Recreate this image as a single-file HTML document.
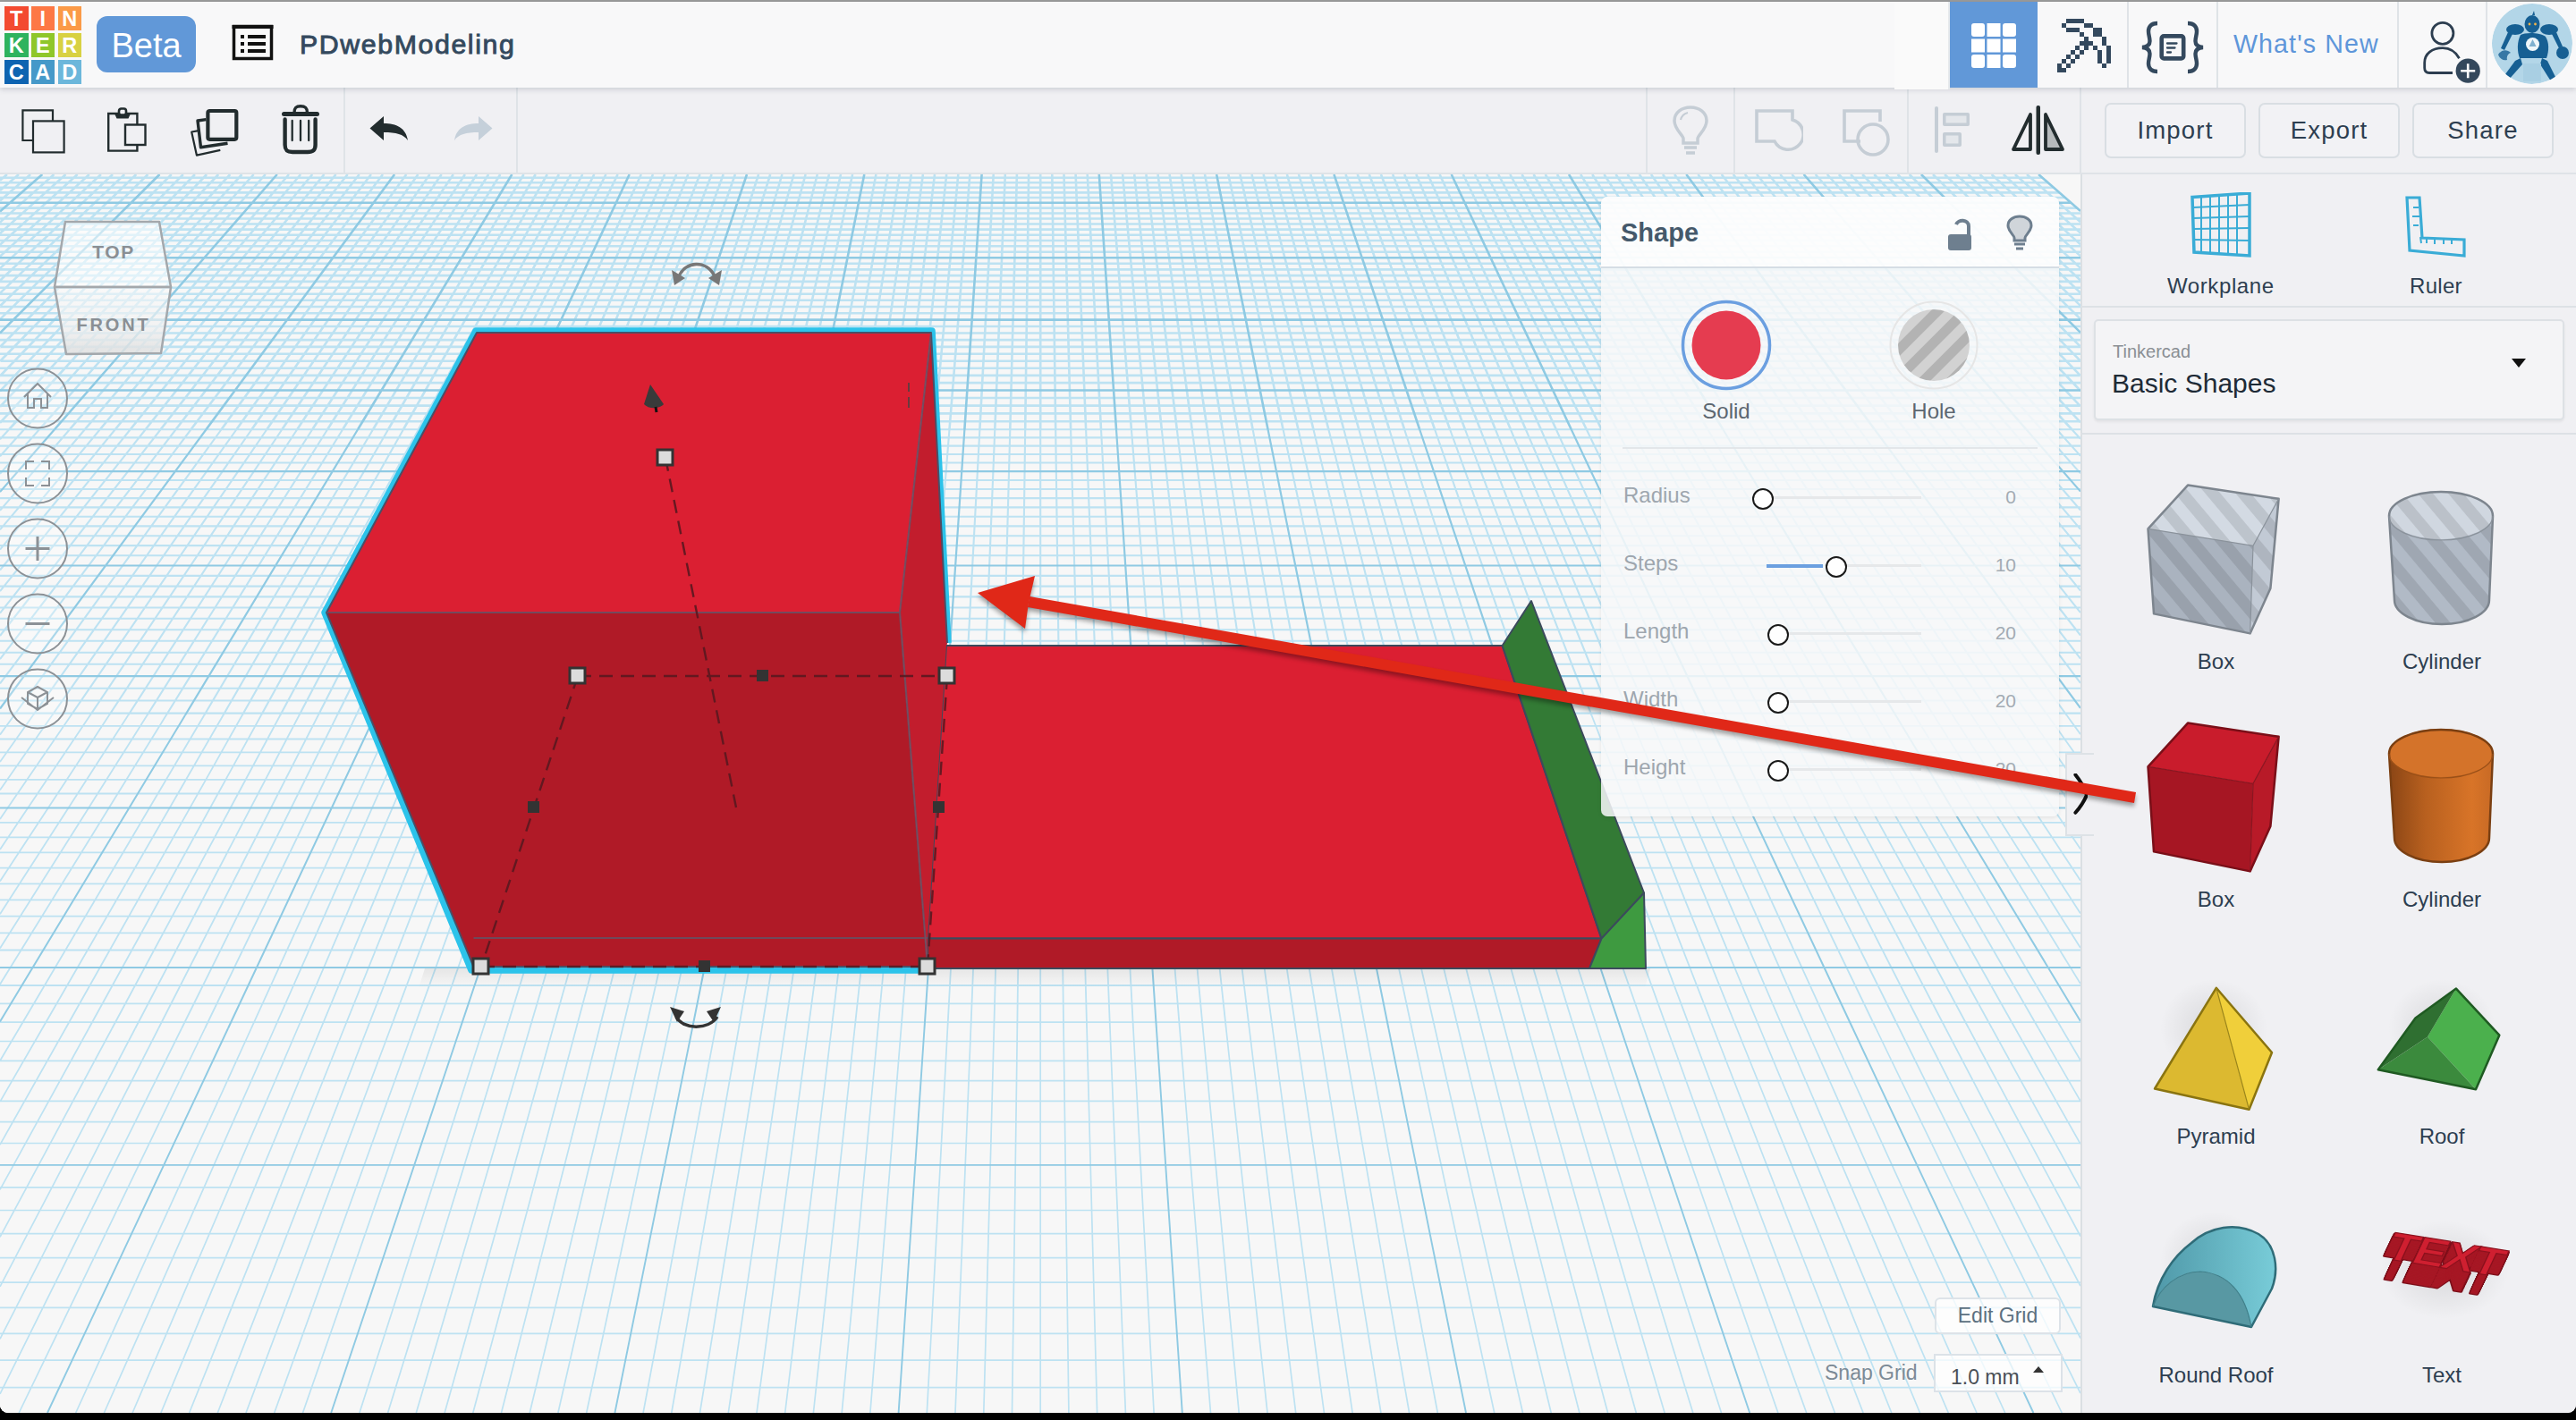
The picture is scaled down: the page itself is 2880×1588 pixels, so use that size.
<!DOCTYPE html>
<html><head><meta charset="utf-8"><style>
*{margin:0;padding:0;box-sizing:border-box}
html,body{width:2880px;height:1588px;overflow:hidden;background:#000;font-family:"Liberation Sans",sans-serif}
.abs{position:absolute}
#app{position:absolute;left:0;top:0;width:2880px;height:1580px;background:#f0f0f3;overflow:hidden;border-radius:0 0 9px 9px}
#topline{position:absolute;left:0;top:0;width:2880px;height:2px;background:#9b9b9b}
#header{position:absolute;left:0;top:2px;width:2880px;height:96px;background:#f8f8f9;box-shadow:0 2px 6px rgba(40,50,70,0.18);z-index:5}
#toolbar{position:absolute;left:0;top:98px;width:2880px;height:97px;background:#f0f0f3;border-bottom:2px solid #dfe3e7;z-index:4}
#viewport{position:absolute;left:0;top:195px;width:2326px;height:1385px;background:#f7f7f7;overflow:hidden}
#rpanel{position:absolute;left:2326px;top:195px;width:554px;height:1385px;background:#f0f0f3}
.tile{position:absolute;width:26.5px;height:26.5px;color:#fff;font-weight:bold;font-size:23.5px;line-height:28px;text-align:center}
.vsep{position:absolute;width:2px;background:#dfe3e7}
.btn{position:absolute;top:17px;height:62px;width:158px;border:2px solid #d9dee3;border-radius:7px;background:#f2f2f5;color:#2d3e50;font-size:27.5px;letter-spacing:1.2px;line-height:58px;text-align:center}
.lbl{position:absolute;white-space:nowrap}
</style></head>
<body>
<div id="app">
<div id="topline"></div>

<div id="header">
<div class="tile" style="left:5px;top:5px;background:#f34a30">T</div><div class="tile" style="left:34.5px;top:5px;background:#fd7845">I</div><div class="tile" style="left:64.5px;top:5px;background:#fb9a47">N</div><div class="tile" style="left:5px;top:35px;background:#2eb35e">K</div><div class="tile" style="left:34.5px;top:35px;background:#8fc72a">E</div><div class="tile" style="left:64.5px;top:35px;background:#d8d142">R</div><div class="tile" style="left:5px;top:65px;background:#0e64b1">C</div><div class="tile" style="left:34.5px;top:65px;background:#4599c9">A</div><div class="tile" style="left:64.5px;top:65px;background:#6cb7db">D</div>
<div class="abs" style="left:108px;top:16px;width:111px;height:63px;background:#6198d8;border-radius:12px;color:#fff;font-size:38px;line-height:66px;text-align:center">Beta</div>
<svg class="abs" style="left:258px;top:24px" width="50" height="44" viewBox="0 0 50 44">
 <rect x="3.5" y="3.5" width="42" height="36" fill="none" stroke="#111" stroke-width="3.5"/>
 <rect x="1.5" y="2" width="46" height="4" fill="#111"/>
 <rect x="11" y="13" width="4" height="4" fill="#111"/><rect x="19" y="13" width="20" height="4" fill="#111"/>
 <rect x="11" y="21" width="4" height="4" fill="#111"/><rect x="19" y="21" width="20" height="4" fill="#111"/>
 <rect x="11" y="29" width="4" height="4" fill="#111"/><rect x="19" y="29" width="20" height="4" fill="#111"/>
</svg>
<div class="lbl" style="left:335px;top:28px;font-size:30.3px;letter-spacing:1.6px;color:#34495e;line-height:40px;-webkit-text-stroke:0.9px #34495e">PDwebModeling</div>

<div class="abs" style="left:2118px;top:0;width:60px;height:98px;background:#fafafa"></div><div class="abs" style="left:2178px;top:0;width:2px;height:98px;background:#e6e9ec"></div><div class="abs" style="left:2180px;top:0;width:98px;height:96px;background:#6198d8"></div>
<svg class="abs" style="left:2204px;top:24px" width="50" height="50" viewBox="0 0 50 50" fill="#fff">
 <rect x="0" y="0" width="15" height="15" rx="3"/><rect x="17.5" y="0" width="15" height="15"/><rect x="35" y="0" width="15" height="15" rx="3"/>
 <rect x="0" y="17.5" width="15" height="15"/><rect x="17.5" y="17.5" width="15" height="15"/><rect x="35" y="17.5" width="15" height="15"/>
 <rect x="0" y="35" width="15" height="15" rx="3"/><rect x="17.5" y="35" width="15" height="15"/><rect x="35" y="35" width="15" height="15" rx="3"/>
</svg>
<div class="vsep" style="left:2378px;top:0;height:96px"></div>
<div class="vsep" style="left:2478px;top:0;height:96px"></div>
<div class="vsep" style="left:2680px;top:0;height:96px"></div>
<div class="vsep" style="left:2779px;top:0;height:96px"></div>
<svg class="abs" style="left:2299.6px;top:19.3px" width="62" height="62" viewBox="0 0 62 62" fill="#34495e" shape-rendering="crispEdges"><g transform="scale(0.996)"><rect x="10" y="0" width="5.1" height="5.1"/><rect x="15" y="0" width="5.1" height="5.1"/><rect x="20" y="0" width="5.1" height="5.1"/><rect x="25" y="0" width="5.1" height="5.1"/><rect x="5" y="5" width="5.1" height="5.1"/><rect x="30" y="5" width="5.1" height="5.1"/><rect x="35" y="5" width="5.1" height="5.1"/><rect x="10" y="10" width="5.1" height="5.1"/><rect x="15" y="10" width="5.1" height="5.1"/><rect x="20" y="10" width="5.1" height="5.1"/><rect x="40" y="10" width="5.1" height="5.1"/><rect x="45" y="10" width="5.1" height="5.1"/><rect x="25" y="15" width="5.1" height="5.1"/><rect x="40" y="15" width="5.1" height="5.1"/><rect x="45" y="15" width="5.1" height="5.1"/><rect x="30" y="20" width="5.1" height="5.1"/><rect x="50" y="20" width="5.1" height="5.1"/><rect x="25" y="25" width="5.1" height="5.1"/><rect x="30" y="25" width="5.1" height="5.1"/><rect x="35" y="25" width="5.1" height="5.1"/><rect x="50" y="25" width="5.1" height="5.1"/><rect x="20" y="30" width="5.1" height="5.1"/><rect x="30" y="30" width="5.1" height="5.1"/><rect x="40" y="30" width="5.1" height="5.1"/><rect x="55" y="30" width="5.1" height="5.1"/><rect x="15" y="35" width="5.1" height="5.1"/><rect x="25" y="35" width="5.1" height="5.1"/><rect x="45" y="35" width="5.1" height="5.1"/><rect x="55" y="35" width="5.1" height="5.1"/><rect x="10" y="40" width="5.1" height="5.1"/><rect x="20" y="40" width="5.1" height="5.1"/><rect x="45" y="40" width="5.1" height="5.1"/><rect x="55" y="40" width="5.1" height="5.1"/><rect x="5" y="45" width="5.1" height="5.1"/><rect x="15" y="45" width="5.1" height="5.1"/><rect x="45" y="45" width="5.1" height="5.1"/><rect x="55" y="45" width="5.1" height="5.1"/><rect x="0" y="50" width="5.1" height="5.1"/><rect x="10" y="50" width="5.1" height="5.1"/><rect x="50" y="50" width="5.1" height="5.1"/><rect x="0" y="55" width="5.1" height="5.1"/><rect x="5" y="55" width="5.1" height="5.1"/></g></svg>
<svg class="abs" style="left:2385px;top:12px" width="90" height="76" viewBox="0 0 90 76">
 <path d="M27 12C20 12 17 16 17 21C17 25 18.5 28 18.5 32C18.5 36 16 38.5 10 39C16 39.5 18.5 42 18.5 46C18.5 50 17 53 17 57C17 62 20 66 27 66" fill="none" stroke="#34495e" stroke-width="4.4"/>
 <path d="M61 12C68 12 71 16 71 21C71 25 69.5 28 69.5 32C69.5 36 72 38.5 78 39C72 39.5 69.5 42 69.5 46C69.5 50 71 53 71 57C71 62 68 66 61 66" fill="none" stroke="#34495e" stroke-width="4.4"/>
 <rect x="31.7" y="26.4" width="24.5" height="25" rx="2.5" fill="none" stroke="#34495e" stroke-width="4.6"/>
 <path d="M38 34.5h10.5M38 39.5h8.5M38 44.5h4" stroke="#34495e" stroke-width="2.3" stroke-linecap="round"/>
</svg>
<div class="lbl" style="left:2497px;top:27.3px;font-size:28.6px;letter-spacing:1.1px;color:#5e96da;line-height:40px">What's New</div>
<svg class="abs" style="left:2700px;top:18.3px" width="76" height="76" viewBox="0 0 76 76">
 <circle cx="30.9" cy="17.3" r="12" fill="none" stroke="#2d3e50" stroke-width="2.8"/>
 <path d="M42 61.5H16C12 61.5 10.7 59 10.7 56V50C10.7 40 19 33.6 31 33.6C39 33.6 45.5 38 49.5 45.2" fill="none" stroke="#2d3e50" stroke-width="2.8"/>
 <circle cx="59.2" cy="59.2" r="13.6" fill="#34485c"/>
 <path d="M59.2 51.2V67.2M51.2 59.2H67.2" stroke="#fff" stroke-width="2.6"/>
</svg>
<svg class="abs" style="left:2785px;top:1px" width="92" height="92" viewBox="0 0 92 92">
 <defs><clipPath id="avc"><circle cx="46" cy="46" r="45"/></clipPath></defs><g clip-path="url(#avc)">
 <circle cx="46" cy="46" r="45" fill="#b3d6e8"/>
 <g fill="#165f93">
  <ellipse cx="46" cy="24" rx="8.5" ry="10"/>
  <path d="M46 14l2-5l1 5z"/>
  <ellipse cx="27" cy="30" rx="10" ry="6"/><ellipse cx="65" cy="30" rx="10" ry="6"/>
  <path d="M33 36c5-3 22-3 28 2c4 6 4 16 1 24h-30c-3-8-3-18 1-26z"/>
  <path d="M19 33l5 2l-9 18l-4-2z"/><path d="M73 33l-5 2l8 16l4-2z"/>
  <circle cx="80" cy="56" r="7"/>
  <path d="M8 58c4-6 10-6 14-2c-3 1-5 4-4 8c-5 1-8-1-10-6z" opacity="0.8"/>
  <path d="M33 62l-6 3l-14 19l6 3l16-18z"/><path d="M57 62l6 3l10 20l-6 3l-12-19z"/>
 </g>
 <path d="M36 68h20v20h-20z" fill="#a9cfe3"/>
 <circle cx="46.5" cy="46.5" r="7.5" fill="#eef6fa"/>
 <path d="M46.5 41l4 8h-8z" fill="#7fb0cf"/>
 <circle cx="43" cy="24" r="1.4" fill="#f2b54a"/><circle cx="49.5" cy="24" r="1.4" fill="#f2b54a"/>
</g></svg>
</div>


<div id="toolbar">
<svg class="abs" style="left:22px;top:23.5px" width="52" height="50" viewBox="0 0 52 50" fill="none" stroke="#222c2e" stroke-width="2.2">
 <path d="M15 35H3.4V1.4H37V13"/>
 <rect x="15" y="13.4" width="34.6" height="35"/>
</svg>
<svg class="abs" style="left:118px;top:22px" width="50" height="54" viewBox="0 0 50 54" fill="none" stroke="#222c2e">
 <path d="M35.4 19V7H3.2V48.6H35.4V42.7" stroke-width="2.4"/>
 <rect x="22" y="19.5" width="22.5" height="22.5" stroke-width="2.4"/>
 <path d="M9.5 6h19l-3 6.5h-13z" fill="#222c2e" stroke="none"/>
 <rect x="15" y="1.5" width="8" height="7" rx="2.5" fill="#f0f0f3" stroke-width="2.6"/>
</svg>
<svg class="abs" style="left:212px;top:20px" width="60" height="60" viewBox="0 0 60 60" fill="none" stroke="#222c2e">
 <path d="M10 28.2L2.2 29.5L7.9 55.6L34.3 49.9" stroke-width="2.2" stroke-linejoin="round"/>
 <path d="M18.4 15.6L9 17L12.5 46.8L42.5 42.3" stroke-width="3.4" stroke-linejoin="round"/>
 <rect x="20.4" y="6" width="31.9" height="31.8" rx="2" stroke-width="4.2" fill="#f0f0f3"/>
</svg>
<svg class="abs" style="left:314px;top:19px" width="46" height="58" viewBox="0 0 46 58" fill="none" stroke="#222c2e">
 <path d="M3.5 10.5H40.5" stroke-width="5" stroke-linecap="round"/>
 <path d="M15 9C15 3.5 17 1.8 22 1.8S29.5 3.5 29.5 9" stroke-width="3.4"/>
 <path d="M4.6 16.5V45C4.6 51 7 53 13 53H30C36 53 38.6 51 38.6 45V16.5" stroke-width="4.4" stroke-linecap="round"/>
 <path d="M12.7 18V40M22 18V40M31.2 18V40" stroke-width="2.3" stroke-linecap="round"/>
</svg>
<div class="vsep" style="left:384px;top:0;height:97px"></div>
<svg class="abs" style="left:412px;top:31px" width="46" height="30" viewBox="0 0 46 30">
 <path d="M1.5 14.5L17 1v8c14 0 25 5 27 19c-5-7-13-9-27-9v9z" fill="#222c2e"/>
</svg>
<svg class="abs" style="left:506px;top:31px" width="46" height="30" viewBox="0 0 46 30">
 <path d="M44.5 14.5L29 1v8c-14 0-25 5-27 19c5-7 13-9 27-9v9z" fill="#c5d0da"/>
</svg>
<div class="vsep" style="left:577px;top:0;height:97px"></div>

<div class="vsep" style="left:1840px;top:0;height:97px"></div>
<svg class="abs" style="left:1868px;top:20px" width="44" height="58" viewBox="0 0 44 58" fill="none" stroke="#c5cdd5">
 <path d="M14 42v-5c0-4-10-10-10-20c0-9 8-15 18-15s18 6 18 15c0 10-10 16-10 20v5z" stroke-width="3.5"/>
 <path d="M15 47h14M17 53h10" stroke-width="3.5"/>
 <path d="M11 16c1-4 4-7 8-8" stroke-width="2.2"/>
</svg>
<div class="vsep" style="left:1938px;top:0;height:97px"></div>
<svg class="abs" style="left:1962px;top:24px" width="54" height="54" viewBox="0 0 54 54" fill="none" stroke="#c5cdd5" stroke-width="3.6">
 <path d="M2 2h40v10a17 17 0 1 1-20 24h-20z"/>
</svg>
<svg class="abs" style="left:2060px;top:24px" width="54" height="54" viewBox="0 0 54 54" fill="none" stroke="#c5cdd5" stroke-width="3.6">
 <path d="M20 36H2V2h40v12"/>
 <circle cx="34" cy="34" r="17"/>
</svg>
<div class="vsep" style="left:2132px;top:0;height:97px"></div>
<svg class="abs" style="left:2160px;top:20px" width="46" height="56" viewBox="0 0 46 56" fill="#c5cdd5">
 <rect x="3" y="1" width="4" height="52" rx="2"/>
 <rect x="12" y="8" width="30" height="15" rx="2"/><rect x="15.5" y="11.5" width="23" height="8" fill="#e4e7eb"/>
 <rect x="12" y="30" width="21" height="16" rx="2"/><rect x="15.5" y="33.5" width="14" height="9" fill="#e4e7eb"/>
</svg>
<svg class="abs" style="left:2249px;top:20px" width="60" height="56" viewBox="0 0 60 56">
 <rect x="27.5" y="0" width="4.5" height="55" rx="2" fill="#222c2e"/>
 <path d="M21 10v39h-19z" fill="none" stroke="#222c2e" stroke-width="3.8" stroke-linejoin="round"/>
 <path d="M38 10v39h19z" fill="#b6babc" stroke="#222c2e" stroke-width="3.8" stroke-linejoin="round"/>
</svg>
<div class="vsep" style="left:2325px;top:0;height:97px"></div>
<div class="btn" style="left:2353px">Import</div>
<div class="btn" style="left:2525px">Export</div>
<div class="btn" style="left:2697px">Share</div>
</div>

<div id="viewport">
<svg class="abs" style="left:0;top:0" width="2326" height="1385" viewBox="0 195 2326 1385">
 <rect x="0" y="195" width="2326" height="1385" fill="#f7f7f7"/>
 <defs><filter id="gblur" x="0" y="0" width="1" height="1"><feGaussianBlur stdDeviation="0.6"/></filter></defs>
 <g filter="url(#gblur)">
 <path d="M0 198.7H2283.3M0 204.2H2289.6M0 209.7H2295.9M0 215.4H2302.4M0 221H2308.9M0 232.6H2322.1M0 238.5H2326M0 244.5H2326M0 250.5H2326M0 256.6H2326M0 262.8H2326M0 269H2326M0 275.3H2326M0 281.7H2326M0 294.8H2326M0 301.4H2326M0 308.1H2326M0 314.9H2326M0 321.8H2326M0 328.8H2326M0 335.8H2326M0 343H2326M0 350.2H2326M0 365H2326M0 372.5H2326M0 380.1H2326M0 387.9H2326M0 395.7H2326M0 403.7H2326M0 411.7H2326M0 419.9H2326M0 428.1H2326M0 445H2326M0 453.6H2326M0 462.4H2326M0 471.2H2326M7.9 195L0 201.7M21 195L0 213M34.1 195L0 224.6M60.4 195L0 248.6M73.5 195L0 261M86.6 195L0 273.7M99.8 195L0 286.8M112.9 195L0 300.1M126 195L0 313.8M139.2 195L0 327.9M152.3 195L0 342.3M165.4 195L0 357.1M191.7 195L0 388M204.8 195L0 404M217.9 195L0 420.5M231.1 195L0 437.4M244.2 195L0 454.9M257.3 195L0 472.8M270.5 195L10.3 480M283.6 195L27.2 480M296.7 195L44.2 480M323 195L78.1 480M336.1 195L95.1 480M349.2 195L112 480M362.4 195L129 480M375.5 195L145.9 480M388.6 195L162.9 480M401.7 195L179.8 480M414.9 195L196.8 480M428 195L213.7 480M454.3 195L247.7 480M467.4 195L264.6 480M480.5 195L281.6 480M493.6 195L298.5 480M506.8 195L315.5 480M519.9 195L332.4 480M533 195L349.4 480M546.2 195L366.3 480M559.3 195L383.3 480M585.5 195L417.2 480M598.7 195L434.2 480M611.8 195L451.1 480M624.9 195L468.1 480M638.1 195L485 480M651.2 195L502 480M664.3 195L518.9 480M677.4 195L535.9 480M690.6 195L552.8 480M716.8 195L586.7 480M730 195L603.7 480M743.1 195L620.7 480M756.2 195L637.6 480M769.3 195L654.6 480M782.5 195L671.5 480M795.6 195L688.5 480M808.7 195L705.4 480M821.9 195L722.4 480M848.1 195L756.3 480M861.2 195L773.2 480M874.4 195L790.2 480M887.5 195L807.2 480M900.6 195L824.1 480M913.8 195L841.1 480M926.9 195L858 480M940 195L875 480M953.1 195L891.9 480M979.4 195L925.8 480M992.5 195L942.8 480M1005.7 195L959.7 480M1018.8 195L976.7 480M1031.9 195L993.7 480M1045 195L1010.6 480M1058.2 195L1027.6 480M1071.3 195L1044.5 480M1084.4 195L1061.5 480M1110.7 195L1095.4 480M1123.8 195L1112.3 480M1136.9 195L1129.3 480M1150.1 195L1146.2 480M1163.2 195L1163.2 480M1176.3 195L1180.2 480M1189.5 195L1197.1 480M1202.6 195L1214.1 480M1215.7 195L1231 480M1242 195L1264.9 480M1255.1 195L1281.9 480M1268.2 195L1298.8 480M1281.4 195L1315.8 480M1294.5 195L1332.7 480M1307.6 195L1349.7 480M1320.7 195L1366.7 480M1333.9 195L1383.6 480M1347 195L1400.6 480M1373.3 195L1434.5 480M1386.4 195L1451.4 480M1399.5 195L1468.4 480M1412.6 195L1485.3 480M1425.8 195L1502.3 480M1438.9 195L1519.2 480M1452 195L1536.2 480M1465.2 195L1553.2 480M1478.3 195L1570.1 480M1504.5 195L1604 480M1517.7 195L1621 480M1530.8 195L1637.9 480M1543.9 195L1654.9 480M1557.1 195L1671.8 480M1570.2 195L1688.8 480M1583.3 195L1705.7 480M1596.4 195L1722.7 480M1609.6 195L1739.7 480M1635.8 195L1773.6 480M1649 195L1790.5 480M1662.1 195L1807.5 480M1675.2 195L1824.4 480M1688.3 195L1841.4 480M1701.5 195L1858.3 480M1714.6 195L1875.3 480M1727.7 195L1892.2 480M1740.9 195L1909.2 480M1767.1 195L1943.1 480M1780.2 195L1960.1 480M1793.4 195L1977 480M1806.5 195L1994 480M1819.6 195L2010.9 480M1832.8 195L2027.9 480M1845.9 195L2044.8 480M1859 195L2061.8 480M1872.1 195L2078.7 480M1898.4 195L2112.7 480M1911.5 195L2129.6 480M1924.7 195L2146.6 480M1937.8 195L2163.5 480M1950.9 195L2180.5 480M1964 195L2197.4 480M1977.2 195L2214.4 480M1990.3 195L2231.3 480M2003.4 195L2248.3 480M2029.7 195L2282.2 480M2042.8 195L2299.2 480M2055.9 195L2316.1 480M2069.1 195L2326 472.4M2082.2 195L2326 454.4M2095.3 195L2326 437M2108.5 195L2326 420.1M2121.6 195L2326 403.6M2134.7 195L2326 387.6M2161 195L2326 356.7M2174.1 195L2326 341.9M2187.2 195L2326 327.5M2200.4 195L2326 313.5M2213.5 195L2326 299.8M2226.6 195L2326 286.4M2239.8 195L2326 273.4M2252.9 195L2326 260.6M2266 195L2326 248.2" stroke="#bde2f2" stroke-width="2.6" fill="none"/>
 <path d="M0 480.2H2326M0 489.4H2326M0 498.6H2326M0 508H2326M0 517.5H2326M0 537H2326M0 547H2326M0 557.1H2326M0 567.4H2326M0 577.8H2326M0 588.4H2326M0 599.2H2326M0 610.1H2326M0 621.2H2326M0 643.9H2326M0 655.6H2326M0 667.4H2326M0 679.5H2326M0 691.7H2326M0 704.2H2326M0 716.8H2326M0 729.7H2326M0 742.8H2326M0 769.7H2326M0 783.5H2326M0 797.6H2326M10.3 480L0 491.3M27.2 480L0 510.3M44.2 480L0 529.9M78.1 480L0 570.9M95.1 480L0 592.4M112 480L0 614.6M129 480L0 637.5M145.9 480L0 661.2M162.9 480L0 685.7M179.8 480L0 711M196.8 480L0 737.2M213.7 480L0 764.3M247.7 480L15.7 800M264.6 480L36.9 800M281.6 480L58.2 800M298.5 480L79.4 800M315.5 480L100.7 800M332.4 480L121.9 800M349.4 480L143.2 800M366.3 480L164.4 800M383.3 480L185.7 800M417.2 480L228.2 800M434.2 480L249.4 800M451.1 480L270.7 800M468.1 480L291.9 800M485 480L313.2 800M502 480L334.4 800M518.9 480L355.7 800M535.9 480L376.9 800M552.8 480L398.2 800M586.7 480L440.7 800M603.7 480L461.9 800M620.7 480L483.2 800M637.6 480L504.4 800M654.6 480L525.7 800M671.5 480L546.9 800M688.5 480L568.2 800M705.4 480L589.4 800M722.4 480L610.7 800M756.3 480L653.2 800M773.2 480L674.4 800M790.2 480L695.7 800M807.2 480L716.9 800M824.1 480L738.2 800M841.1 480L759.4 800M858 480L780.7 800M875 480L801.9 800M891.9 480L823.2 800M925.8 480L865.7 800M942.8 480L886.9 800M959.7 480L908.2 800M976.7 480L929.4 800M993.7 480L950.7 800M1010.6 480L971.9 800M1027.6 480L993.2 800M1044.5 480L1014.4 800M1061.5 480L1035.7 800M1095.4 480L1078.2 800M1112.3 480L1099.4 800M1129.3 480L1120.7 800M1146.2 480L1141.9 800M1163.2 480L1163.2 800M1180.2 480L1184.5 800M1197.1 480L1205.7 800M1214.1 480L1227 800M1231 480L1248.2 800M1264.9 480L1290.7 800M1281.9 480L1312 800M1298.8 480L1333.2 800M1315.8 480L1354.5 800M1332.7 480L1375.7 800M1349.7 480L1397 800M1366.7 480L1418.2 800M1383.6 480L1439.5 800M1400.6 480L1460.7 800M1434.5 480L1503.2 800M1451.4 480L1524.5 800M1468.4 480L1545.7 800M1485.3 480L1567 800M1502.3 480L1588.2 800M1519.2 480L1609.5 800M1536.2 480L1630.7 800M1553.2 480L1652 800M1570.1 480L1673.2 800M1604 480L1715.7 800M1621 480L1737 800M1637.9 480L1758.2 800M1654.9 480L1779.5 800M1671.8 480L1800.7 800M1688.8 480L1822 800M1705.7 480L1843.2 800M1722.7 480L1864.5 800M1739.7 480L1885.7 800M1773.6 480L1928.2 800M1790.5 480L1949.5 800M1807.5 480L1970.7 800M1824.4 480L1992 800M1841.4 480L2013.2 800M1858.3 480L2034.5 800M1875.3 480L2055.7 800M1892.2 480L2077 800M1909.2 480L2098.2 800M1943.1 480L2140.7 800M1960.1 480L2162 800M1977 480L2183.2 800M1994 480L2204.5 800M2010.9 480L2225.7 800M2027.9 480L2247 800M2044.8 480L2268.2 800M2061.8 480L2289.5 800M2078.7 480L2310.7 800M2112.7 480L2326 763.8M2129.6 480L2326 736.7M2146.6 480L2326 710.5M2163.5 480L2326 685.2M2180.5 480L2326 660.7M2197.4 480L2326 637M2214.4 480L2326 614.1M2231.3 480L2326 591.9M2248.3 480L2326 570.5M2282.2 480L2326 529.4M2299.2 480L2326 509.9M2316.1 480L2326 490.8" stroke="#bde2f2" stroke-width="2.1" fill="none"/>
 <path d="M0 811.9H2326M0 826.5H2326M0 841.3H2326M0 856.4H2326M0 871.8H2326M0 887.5H2326M0 919.8H2326M0 936.4H2326M0 953.4H2326M0 970.7H2326M0 988.3H2326M0 1006.3H2326M0 1024.6H2326M0 1043.4H2326M0 1062.5H2326M0 1102H2326M0 1122.4H2326M0 1143.2H2326M15.7 800L0 821.6M36.9 800L0 851.9M58.2 800L0 883.4M79.4 800L0 916M100.7 800L0 950M121.9 800L0 985.4M143.2 800L0 1022.2M164.4 800L0 1060.6M185.7 800L0 1100.7M228.2 800L21.5 1150M249.4 800L47.4 1150M270.7 800L73.4 1150M291.9 800L99.3 1150M313.2 800L125.3 1150M334.4 800L151.2 1150M355.7 800L177.2 1150M376.9 800L203.1 1150M398.2 800L229.1 1150M440.7 800L280.9 1150M461.9 800L306.9 1150M483.2 800L332.8 1150M504.4 800L358.8 1150M525.7 800L384.7 1150M546.9 800L410.7 1150M568.2 800L436.6 1150M589.4 800L462.6 1150M610.7 800L488.5 1150M653.2 800L540.4 1150M674.4 800L566.4 1150M695.7 800L592.3 1150M716.9 800L618.3 1150M738.2 800L644.2 1150M759.4 800L670.2 1150M780.7 800L696.1 1150M801.9 800L722.1 1150M823.2 800L748 1150M865.7 800L799.9 1150M886.9 800L825.9 1150M908.2 800L851.8 1150M929.4 800L877.8 1150M950.7 800L903.7 1150M971.9 800L929.7 1150M993.2 800L955.6 1150M1014.4 800L981.6 1150M1035.7 800L1007.5 1150M1078.2 800L1059.4 1150M1099.4 800L1085.4 1150M1120.7 800L1111.3 1150M1141.9 800L1137.3 1150M1163.2 800L1163.2 1150M1184.5 800L1189.1 1150M1205.7 800L1215.1 1150M1227 800L1241 1150M1248.2 800L1267 1150M1290.7 800L1318.9 1150M1312 800L1344.8 1150M1333.2 800L1370.8 1150M1354.5 800L1396.7 1150M1375.7 800L1422.7 1150M1397 800L1448.6 1150M1418.2 800L1474.6 1150M1439.5 800L1500.5 1150M1460.7 800L1526.5 1150M1503.2 800L1578.4 1150M1524.5 800L1604.3 1150M1545.7 800L1630.3 1150M1567 800L1656.2 1150M1588.2 800L1682.2 1150M1609.5 800L1708.1 1150M1630.7 800L1734.1 1150M1652 800L1760 1150M1673.2 800L1786 1150M1715.7 800L1837.9 1150M1737 800L1863.8 1150M1758.2 800L1889.8 1150M1779.5 800L1915.7 1150M1800.7 800L1941.7 1150M1822 800L1967.6 1150M1843.2 800L1993.6 1150M1864.5 800L2019.5 1150M1885.7 800L2045.5 1150M1928.2 800L2097.3 1150M1949.5 800L2123.3 1150M1970.7 800L2149.2 1150M1992 800L2175.2 1150M2013.2 800L2201.1 1150M2034.5 800L2227.1 1150M2055.7 800L2253 1150M2077 800L2279 1150M2098.2 800L2304.9 1150M2140.7 800L2326 1100.1M2162 800L2326 1060M2183.2 800L2326 1021.6M2204.5 800L2326 984.8M2225.7 800L2326 949.4M2247 800L2326 915.5M2268.2 800L2326 882.8M2289.5 800L2326 851.4M2310.7 800L2326 821.1" stroke="#bde2f2" stroke-width="1.8" fill="none"/>
 <path d="M0 193.2H2277.1M0 1164.5H2326M0 1186.3H2326M0 1208.6H2326M0 1231.3H2326M0 1254.6H2326M0 1278.5H2326M0 1327.9H2326M0 1353.5H2326M0 1379.7H2326M0 1406.6H2326M0 1434.1H2326M0 1462.4H2326M0 1491.4H2326M0 1521.1H2326M0 1551.7H2326M21.5 1150L0 1186.3M47.4 1150L0 1232.1M73.4 1150L0 1280.1M99.3 1150L0 1330.4M125.3 1150L0 1383.3M151.2 1150L0 1438.8M177.2 1150L0 1497.3M203.1 1150L0 1558.9M229.1 1150L21.2 1580M280.9 1150L84.7 1580M306.9 1150L116.4 1580M332.8 1150L148.1 1580M358.8 1150L179.9 1580M384.7 1150L211.6 1580M410.7 1150L243.3 1580M436.6 1150L275 1580M462.6 1150L306.7 1580M488.5 1150L338.5 1580M540.4 1150L401.9 1580M566.4 1150L433.6 1580M592.3 1150L465.3 1580M618.3 1150L497.1 1580M644.2 1150L528.8 1580M670.2 1150L560.5 1580M696.1 1150L592.2 1580M722.1 1150L623.9 1580M748 1150L655.7 1580M799.9 1150L719.1 1580M825.9 1150L750.8 1580M851.8 1150L782.5 1580M877.8 1150L814.3 1580M903.7 1150L846 1580M929.7 1150L877.7 1580M955.6 1150L909.4 1580M981.6 1150L941.2 1580M1007.5 1150L972.9 1580M1059.4 1150L1036.3 1580M1085.4 1150L1068 1580M1111.3 1150L1099.8 1580M1137.3 1150L1131.5 1580M1163.2 1150L1163.2 1580M1189.1 1150L1194.9 1580M1215.1 1150L1226.6 1580M1241 1150L1258.4 1580M1267 1150L1290.1 1580M1318.9 1150L1353.5 1580M1344.8 1150L1385.2 1580M1370.8 1150L1417 1580M1396.7 1150L1448.7 1580M1422.7 1150L1480.4 1580M1448.6 1150L1512.1 1580M1474.6 1150L1543.9 1580M1500.5 1150L1575.6 1580M1526.5 1150L1607.3 1580M1578.4 1150L1670.7 1580M1604.3 1150L1702.5 1580M1630.3 1150L1734.2 1580M1656.2 1150L1765.9 1580M1682.2 1150L1797.6 1580M1708.1 1150L1829.3 1580M1734.1 1150L1861.1 1580M1760 1150L1892.8 1580M1786 1150L1924.5 1580M1837.9 1150L1987.9 1580M1863.8 1150L2019.7 1580M1889.8 1150L2051.4 1580M1915.7 1150L2083.1 1580M1941.7 1150L2114.8 1580M1967.6 1150L2146.5 1580M1993.6 1150L2178.3 1580M2019.5 1150L2210 1580M2045.5 1150L2241.7 1580M2097.3 1150L2305.2 1580M2123.3 1150L2326 1558.1M2149.2 1150L2326 1496.5M2175.2 1150L2326 1438.1M2201.1 1150L2326 1382.5M2227.1 1150L2326 1329.7M2253 1150L2326 1279.4M2279 1150L2326 1231.4M2304.9 1150L2326 1185.7" stroke="#bde2f2" stroke-width="1.7" fill="none"/>
 <path d="M0 226.8H2315.4M0 288.2H2326M0 357.6H2326M0 436.5H2326M47.3 195L0 236.4M178.5 195L0 372.3M309.8 195L61.2 480M441.1 195L230.7 480M572.4 195L400.2 480M703.7 195L569.8 480M835 195L739.3 480M966.3 195L908.9 480M1097.6 195L1078.4 480M1228.8 195L1248 480M1360.1 195L1417.5 480M1491.4 195L1587.1 480M1622.7 195L1756.6 480M1754 195L1926.2 480M1885.3 195L2095.7 480M2016.6 195L2265.2 480M2147.9 195L2326 371.9M2279.1 195L2326 236.1" stroke="#8fcae3" stroke-width="2.6" fill="none"/>
 <path d="M0 527.2H2326M0 632.5H2326M0 756.2H2326M61.2 480L0 550.1M230.7 480L0 792.5M400.2 480L206.9 800M569.8 480L419.4 800M739.3 480L631.9 800M908.9 480L844.4 800M1078.4 480L1056.9 800M1248 480L1269.5 800M1417.5 480L1482 800M1587.1 480L1694.5 800M1756.6 480L1907 800M1926.2 480L2119.5 800M2095.7 480L2326 791.9M2265.2 480L2326 549.6" stroke="#8fcae3" stroke-width="2.2" fill="none"/>
 <path d="M0 903.5H2326M0 1082H2326M206.9 800L0 1142.6M419.4 800L255 1150M631.9 800L514.5 1150M844.4 800L774 1150M1056.9 800L1033.5 1150M1269.5 800L1292.9 1150M1482 800L1552.4 1150M1694.5 800L1811.9 1150M1907 800L2071.4 1150M2119.5 800L2326 1141.9" stroke="#8fcae3" stroke-width="2.0" fill="none"/>
 <path d="M0 1302.9H2326M255 1150L53 1580M514.5 1150L370.2 1580M774 1150L687.4 1580M1033.5 1150L1004.6 1580M1292.9 1150L1321.8 1580M1552.4 1150L1639 1580M1811.9 1150L1956.2 1580M2071.4 1150L2273.4 1580" stroke="#8fcae3" stroke-width="1.9" fill="none"/>
 </g>

 <!-- shadow -->
 <defs><linearGradient id="shd" x1="0" y1="0" x2="0" y2="1"><stop offset="0" stop-color="rgba(0,0,0,0.07)"/><stop offset="1" stop-color="rgba(0,0,0,0)"/></linearGradient></defs><path d="M475 1083H1845l-6 22H468z" fill="url(#shd)"/>
 <!-- cube right face -->
 <polygon points="1041,372 1059,719 1058,722 1037,1050 1037,1081 1006,685" fill="#c21d2d"/>
 <!-- plate top -->
 <polygon points="1058,722 1679.6,722 1790.5,1049.6 1037,1049.6" fill="#db1f32" stroke="#3c4a5c" stroke-width="2" stroke-linejoin="round"/>
 <!-- plate front -->
 <polygon points="1037,1049.6 1790.5,1049.6 1777,1083 1037,1083" fill="#b01a27" stroke="#3c4a5c" stroke-width="2"/>
 <!-- green roof -->
 <polygon points="1679.6,722 1712,672 1838,998.5 1790.5,1049.6" fill="#337a35" stroke="#3c4a5c" stroke-width="2" stroke-linejoin="round"/>
 <polygon points="1790.5,1049.6 1838,998.5 1840,1083 1777,1083" fill="#3e9a40" stroke="#3c4a5c" stroke-width="2" stroke-linejoin="round"/>

 <polyline points="1040,1085 527,1085 363,685 532,370 1042,370 1060,719" fill="none" stroke="#2cc3ea" stroke-width="7.5" stroke-linejoin="round"/><!--533,372 1041,372 1059,719 1058,722 1037,1081 529.5,1081 365,685-->
 <polygon points="533,372 1041,372 1006,685 365,685" fill="#db1f32"/>
 <polygon points="365,685 1006,685 1037,1081 529.5,1081" fill="#b01a27"/>
 <polygon points="1041,372 1059,719 1058,722 1037,1050 1037,1081 1006,685" fill="#c21d2d"/>
 <polyline points="1037,1081 529.5,1081 365,685 533,372 1041,372 1059,719" fill="none" stroke="#4a4f66" stroke-width="2" stroke-linejoin="round"/><!--533,372 1041,372 1059,719 1058,722 1037,1081 529.5,1081 365,685-->
 <path d="M365 685H1006L1037 1081M1006 685L1041 372M529.5 1049H1037" stroke="#5a5a6e" stroke-width="2.2" fill="none" opacity="0.75"/>

 <g stroke="#5a1820" stroke-width="2.4" stroke-dasharray="15 9" fill="none" opacity="0.9">
  <path d="M646 756H1059"/><path d="M646 756L538 1081"/><path d="M1059 756L1037 1081"/><path d="M538 1081H1037"/>
  <path d="M744 512L823 903"/>
 </g>
 <g fill="#dcdcdc" stroke="#333" stroke-width="3">
  <rect x="637" y="747" width="17" height="17"/><rect x="1050" y="747" width="17" height="17"/>
  <rect x="529" y="1072" width="17" height="17"/><rect x="1028" y="1072" width="17" height="17"/>
  <rect x="735" y="503" width="17" height="17"/>
 </g>
 <g fill="#333">
  <rect x="846" y="749" width="13" height="13"/><rect x="590" y="896" width="13" height="13"/>
  <rect x="1043" y="896" width="13" height="13"/><rect x="781" y="1074" width="13" height="13"/>
 </g>
 <path d="M727 430L742 452C738 457 725 458 720 452Z" fill="#3a3a3a"/>
 <path d="M733 455L734 461" stroke="#111" stroke-width="3"/>
 <path d="M759 309C766 292 790 290 799 309" stroke="#777" stroke-width="3.5" fill="none"/>
 <path d="M751 302l3 17l12-8z" fill="#777"/><path d="M807 302l-3 17l-12-8z" fill="#777"/>
 <path d="M756 1137c8 15 36 15 46 0" stroke="#333" stroke-width="3.5" fill="none"/>
 <path d="M749 1126l16 5l-8 12z" fill="#333"/><path d="M806 1126l-16 5l8 12z" fill="#333"/>
 <path d="M1016 428v10M1016 444v12" stroke="#444" stroke-width="1.5"/>

 <g>
  <polygon points="73,248 178,248 191,321 61,321" fill="rgba(255,255,255,0.55)" stroke="#a4a8ac" stroke-width="2.5" stroke-linejoin="round"/>
  <defs><linearGradient id="vcg" x1="0" y1="0" x2="0" y2="1"><stop offset="0" stop-color="rgba(250,250,250,0.55)"/><stop offset="0.6" stop-color="rgba(240,240,240,0.7)"/><stop offset="1" stop-color="rgba(222,222,222,0.85)"/></linearGradient></defs><polygon points="61,321 191,321 180,395 74,396" fill="url(#vcg)" stroke="#a4a8ac" stroke-width="2.5" stroke-linejoin="round"/>
  <text x="127" y="289" font-family="Liberation Sans" font-weight="bold" font-size="21" letter-spacing="1.5" fill="#8a8f94" text-anchor="middle">TOP</text>
  <text x="127" y="370" font-family="Liberation Sans" font-weight="bold" font-size="20" letter-spacing="2.8" fill="#8a8f94" text-anchor="middle">FRONT</text>
 </g>
 <g fill="rgba(255,255,255,0.25)" stroke="#8c9196" stroke-width="2">
  <circle cx="42" cy="445.5" r="33"/><circle cx="42" cy="529.5" r="33"/><circle cx="42" cy="613.5" r="33"/><circle cx="42" cy="697.5" r="33"/><circle cx="42" cy="781.5" r="33"/>
 </g>
 <g fill="none" stroke="#8c9196" stroke-width="2">
  <path d="M27 444l15-15l15 15M31 440v16h7v-10h8v10h7v-16"/>
  <path d="M29 525v-9h9M46 516h9v9M55 534v9h-9M38 543h-9v-9"/>
  <path d="M42 600v27M28.5 613.5h27" stroke-width="3"/>
  <path d="M28.5 697.5h27" stroke-width="3"/>
  <path d="M42 768l-11 6v13l11 6l11-6v-13zM31 774l11 6l11-6M42 780v13M24 780l18 14l18-14"/>
 </g>
</svg>
<div class="abs" style="left:2163px;top:1256px;width:141px;height:41px;border:2px solid #dde3e8;border-radius:6px;background:rgba(255,255,255,0.75);color:#5c7080;font-size:23px;line-height:37px;text-align:center">Edit Grid</div>
<div class="lbl" style="left:2040px;top:1325.4px;font-size:23px;color:#7c8a96;line-height:30px">Snap Grid</div>
<div class="abs" style="left:2162px;top:1319px;width:144px;height:43px;border:2px solid #dce2e8;background:rgba(255,255,255,0.75);color:#4a5056;font-size:23px;line-height:48px;padding-left:17px">1.0 mm</div>
<svg class="abs" style="left:2273px;top:1333px" width="12" height="7"><path d="M0 7L6 0L12 7z" fill="#333"/></svg>
</div>


<div class="abs" style="left:1790px;top:220px;width:512px;height:693px;border-radius:7px;background:rgba(247,248,249,0.86);box-shadow:0 2px 4px rgba(0,0,0,0.08);overflow:hidden">
 <div class="abs" style="left:0;top:0;width:512px;height:80px;background:rgba(255,255,255,0.7);border-bottom:2px solid #d5dde4"></div>
 <div class="lbl" style="left:22px;top:22px;font-size:29px;font-weight:bold;color:#45596b;line-height:36px">Shape</div>
 <svg class="abs" style="left:386px;top:22px" width="30" height="40" viewBox="0 0 30 40">
  <path d="M11 9c2-6 14-6 14 2v12" fill="none" stroke="#6e7f8f" stroke-width="4"/>
  <rect x="2" y="20" width="26" height="18" rx="3" fill="#6e7f8f"/>
 </svg>
 <svg class="abs" style="left:452px;top:20px" width="32" height="42" viewBox="0 0 32 42">
  <path d="M10 29v-3c0-3-7-7-7-14c0-6 6-10 13-10s13 4 13 10c0 7-7 11-7 14v3z" fill="#d0d5da" stroke="#6e7f8f" stroke-width="3"/>
  <path d="M10 33h12M12 38h8" stroke="#6e7f8f" stroke-width="3"/>
 </svg>
 <svg class="abs" style="left:88px;top:114px" width="104" height="104" viewBox="0 0 104 104">
  <circle cx="52" cy="52" r="48.5" fill="none" stroke="#6b9fe0" stroke-width="3.5"/>
  <circle cx="52" cy="52" r="38.5" fill="#e53c50"/>
 </svg>
 <svg class="abs" style="left:320px;top:114px" width="104" height="104" viewBox="0 0 104 104">
  <defs><pattern id="st" patternUnits="userSpaceOnUse" width="22" height="22" patternTransform="rotate(45)"><rect width="11" height="22" fill="#b3b3b3"/><rect x="11" width="11" height="22" fill="#d2d2d2"/></pattern></defs>
  <circle cx="52" cy="52" r="48.5" fill="none" stroke="#e6e6e6" stroke-width="2"/>
  <circle cx="52" cy="52" r="40" fill="url(#st)"/>
 </svg>
 
 <div class="lbl" style="left:90px;width:100px;text-align:center;font-size:24px;color:#5c6670;line-height:30px;top:224.5px">Solid</div>
 <div class="lbl" style="left:322px;top:224.5px;width:100px;text-align:center;font-size:24px;color:#5c6670;line-height:30px">Hole</div>
 <div class="abs" style="left:24px;top:280px;width:464px;height:2px;background:#e3e6e9"></div>
<div class="lbl" style="left:25px;top:319.1px;font-size:24px;color:#9ea6ae;line-height:30px">Radius</div><div class="abs" style="left:180.8px;top:335.0px;width:177.2px;height:3px;background:#e6e8ea"></div><div class="abs" style="left:168.8px;top:325.5px;width:24px;height:24px;border-radius:50%;border:2.5px solid #1a1a1a;background:#fff"></div><div class="lbl" style="left:404.0px;top:320.7px;width:60px;text-align:right;font-size:21px;color:#a3abb3;line-height:30px">0</div><div class="lbl" style="left:25px;top:395.1px;font-size:24px;color:#9ea6ae;line-height:30px">Steps</div><div class="abs" style="left:262.5px;top:411.0px;width:95.5px;height:3px;background:#e6e8ea"></div><div class="abs" style="left:184.5px;top:410.5px;width:63.5px;height:4px;background:#6b9fe0"></div><div class="abs" style="left:250.5px;top:401.5px;width:24px;height:24px;border-radius:50%;border:2.5px solid #1a1a1a;background:#fff"></div><div class="lbl" style="left:404.0px;top:396.7px;width:60px;text-align:right;font-size:21px;color:#a3abb3;line-height:30px">10</div><div class="lbl" style="left:25px;top:471.2px;font-size:24px;color:#9ea6ae;line-height:30px">Length</div><div class="abs" style="left:197.7px;top:487.1px;width:160.3px;height:3px;background:#e6e8ea"></div><div class="abs" style="left:185.7px;top:477.6px;width:24px;height:24px;border-radius:50%;border:2.5px solid #1a1a1a;background:#fff"></div><div class="lbl" style="left:404.0px;top:472.8px;width:60px;text-align:right;font-size:21px;color:#a3abb3;line-height:30px">20</div><div class="lbl" style="left:25px;top:547.2px;font-size:24px;color:#9ea6ae;line-height:30px">Width</div><div class="abs" style="left:197.7px;top:563.1px;width:160.3px;height:3px;background:#e6e8ea"></div><div class="abs" style="left:185.7px;top:553.6px;width:24px;height:24px;border-radius:50%;border:2.5px solid #1a1a1a;background:#fff"></div><div class="lbl" style="left:404.0px;top:548.8px;width:60px;text-align:right;font-size:21px;color:#a3abb3;line-height:30px">20</div><div class="lbl" style="left:25px;top:623.3px;font-size:24px;color:#9ea6ae;line-height:30px">Height</div><div class="abs" style="left:197.7px;top:639.2px;width:160.3px;height:3px;background:#e6e8ea"></div><div class="abs" style="left:185.7px;top:629.7px;width:24px;height:24px;border-radius:50%;border:2.5px solid #1a1a1a;background:#fff"></div><div class="lbl" style="left:404.0px;top:624.9px;width:60px;text-align:right;font-size:21px;color:#a3abb3;line-height:30px">20</div></div>

<div id="rpanel"><div class="abs" style="left:0;top:0;width:2px;height:1385px;background:#dbdfe3"></div>
 <svg class="abs" style="left:122px;top:20px" width="70" height="74" viewBox="0 0 70 74" fill="none" stroke="#3aacd6">
  <path d="M3 5.5L67 1V71L5 67z" stroke-width="3.5"/>
  <path d="M13 5v63M23 4v64M33 3.5v65M43 2.7v66.3M53 2v67" stroke-width="2"/>
  <path d="M4 17l63-3M4 29l63-2M4 41l63-1M5 53l62 1" stroke-width="2"/>
 </svg>
 <div class="lbl" style="left:97px;top:110px;font-size:24px;letter-spacing:0.6px;color:#2d3e50;line-height:30px">Workplane</div>
 <svg class="abs" style="left:362px;top:24px" width="74" height="70" viewBox="0 0 74 70" fill="none" stroke="#3aacd6">
  <path d="M3 2H17L20 47L67 49V67L6 61z" stroke-width="3.2"/>
  <path d="M10 13h6M9 23h8M10 33h6M18 46l1 7M25 47v6M34 48v6M44 48v6M53 48v6" stroke-width="2"/>
 </svg>
 <div class="lbl" style="left:368px;top:110px;font-size:24px;letter-spacing:0.3px;color:#2d3e50;line-height:30px">Ruler</div>
 <div class="abs" style="left:0;top:147px;width:554px;height:2px;background:#dde1e5"></div>
 <div class="abs" style="left:15px;top:162px;width:526px;height:113px;border:2px solid #dde1e5;border-radius:5px;background:#f4f4f6;box-shadow:0 2px 3px rgba(0,0,0,0.06)"></div>
 <div class="lbl" style="left:36px;top:184.5px;font-size:20px;color:#8a8f94;line-height:26px">Tinkercad</div>
 <div class="lbl" style="left:35px;top:215.8px;font-size:30px;color:#1e2a36;line-height:36px">Basic Shapes</div>
 <svg class="abs" style="left:482px;top:206px" width="16" height="10"><path d="M0 0H16L8 10z" fill="#111"/></svg>
 <div class="abs" style="left:0;top:289px;width:554px;height:2px;background:#dde1e5"></div>
<div class="lbl" style="left:51.5px;top:530.0px;width:200px;text-align:center;font-size:24px;color:#2d3e50;line-height:30px">Box</div><div class="lbl" style="left:304.0px;top:530.0px;width:200px;text-align:center;font-size:24px;color:#2d3e50;line-height:30px">Cylinder</div><div class="lbl" style="left:51.5px;top:796.0px;width:200px;text-align:center;font-size:24px;color:#2d3e50;line-height:30px">Box</div><div class="lbl" style="left:304.0px;top:796.0px;width:200px;text-align:center;font-size:24px;color:#2d3e50;line-height:30px">Cylinder</div><div class="lbl" style="left:51.5px;top:1061.0px;width:200px;text-align:center;font-size:24px;color:#2d3e50;line-height:30px">Pyramid</div><div class="lbl" style="left:304.0px;top:1061.0px;width:200px;text-align:center;font-size:24px;color:#2d3e50;line-height:30px">Roof</div><div class="lbl" style="left:51.5px;top:1327.6px;width:200px;text-align:center;font-size:24px;color:#2d3e50;line-height:30px">Round Roof</div><div class="lbl" style="left:304.0px;top:1327.6px;width:200px;text-align:center;font-size:24px;color:#2d3e50;line-height:30px">Text</div>
 <svg class="abs" style="left:0;top:0" width="554" height="1385" viewBox="2326 195 554 1385">
  <defs>
   <pattern id="gs" patternUnits="userSpaceOnUse" width="26" height="26" patternTransform="rotate(-40)"><rect width="13" height="26" fill="rgba(0,0,0,0.10)"/></pattern>
   <radialGradient id="sh"><stop offset="0" stop-color="rgba(0,0,0,0.10)"/><stop offset="1" stop-color="rgba(0,0,0,0)"/></radialGradient>
  </defs>
  <!-- gray box -->
  <polygon points="2446,542.6 2547.6,557.8 2519,610.3 2401.5,591.3" fill="#d3dae3"/>
  <polygon points="2401.5,591.3 2519,610.3 2515.6,708.4 2408,686.4" fill="#aab3bf"/>
  <polygon points="2547.6,557.8 2538.4,657.9 2515.6,708.4 2519,610.3" fill="#c2cad5"/>
  <g fill="url(#gs)"><polygon points="2446,542.6 2547.6,557.8 2538.4,657.9 2515.6,708.4 2408,686.4 2401.5,591.3"/></g>
  <polygon points="2446,542.6 2547.6,557.8 2538.4,657.9 2515.6,708.4 2408,686.4 2401.5,591.3" fill="none" stroke="#7d858e" stroke-width="2.5" stroke-linejoin="round"/>
  <path d="M2401.5 591.3L2519 610.3L2547.6 557.8M2519 610.3L2515.6 708.4" stroke="#8a929b" stroke-width="1.2" fill="none"/>
  <!-- gray cylinder -->
  <path d="M2671 577L2677 671A53 27 0 0 0 2783 671L2787 577z" fill="#b1bac6"/>
  <ellipse cx="2729" cy="576" rx="58" ry="27" fill="#d0d7e0"/>
  <g fill="url(#gs)"><path d="M2671 577L2677 671A53 27 0 0 0 2783 671L2787 577A58 27 0 0 0 2671 577z"/></g>
  <path d="M2671 577L2677 671A53 27 0 0 0 2783 671L2787 577A58 27 0 0 0 2671 577z" fill="none" stroke="#7d858e" stroke-width="2.5"/>
  <path d="M2671 577a58 27 0 0 0 116 0" fill="none" stroke="#8a929b" stroke-width="1.2"/>
  <!-- red box -->
  <polygon points="2446,808.6 2547.6,823.8 2519,876.3 2401.5,857.3" fill="#c91c2c"/>
  <polygon points="2401.5,857.3 2519,876.3 2515.6,974.4 2408,952.4" fill="#a61623"/>
  <polygon points="2547.6,823.8 2538.4,923.9 2515.6,974.4 2519,876.3" fill="#b81a28"/>
  <polygon points="2446,808.6 2547.6,823.8 2538.4,923.9 2515.6,974.4 2408,952.4 2401.5,857.3" fill="none" stroke="#7a0f18" stroke-width="2.5" stroke-linejoin="round"/>
  <path d="M2401.5 857.3L2519 876.3L2547.6 823.8M2519 876.3L2515.6 974.4" stroke="#8a1520" stroke-width="1.2" fill="none"/>
  <!-- orange cylinder -->
  <defs><linearGradient id="og" x1="0" x2="1"><stop offset="0" stop-color="#8a4515"/><stop offset="0.35" stop-color="#b8601f"/><stop offset="0.8" stop-color="#d87428"/><stop offset="1" stop-color="#c86a25"/></linearGradient>
  <linearGradient id="tg" x1="0" x2="1"><stop offset="0" stop-color="#4f98a8"/><stop offset="1" stop-color="#78ccd8"/></linearGradient></defs>
  <path d="M2671 843L2677 937A53 27 0 0 0 2783 937L2787 843z" fill="url(#og)"/>
  <ellipse cx="2729" cy="842" rx="58" ry="27" fill="#d4732a"/>
  <path d="M2671 843L2677 937A53 27 0 0 0 2783 937L2787 843A58 27 0 0 0 2671 843z" fill="none" stroke="#7a3f12" stroke-width="2.5"/>
  <path d="M2671 843a58 27 0 0 0 116 0" fill="none" stroke="#9a5018" stroke-width="1.2"/>
  <!-- pyramid -->
  <ellipse cx="2475" cy="1150" rx="60" ry="55" fill="url(#sh)"/>
  <polygon points="2477.8,1104.8 2514.5,1240.7 2409,1217.5" fill="#dcb930"/>
  <polygon points="2477.8,1104.8 2540,1177 2514.5,1240.7" fill="#f0cf3a"/>
  <polygon points="2477.8,1104.8 2540,1177 2514.5,1240.7 2409,1217.5" fill="none" stroke="#8a7410" stroke-width="2.5" stroke-linejoin="round"/>
  <path d="M2477.8 1104.8L2514.5 1240.7" stroke="#9a8418" stroke-width="1.2"/>
  <!-- roof -->
  <ellipse cx="2730" cy="1150" rx="60" ry="55" fill="url(#sh)"/>
  <polygon points="2746,1105.6 2794.3,1157.7 2768,1218.3 2714,1159.6" fill="#4bb04d"/>
  <polygon points="2658.8,1196.3 2714,1159.6 2768,1218.3" fill="#3b8a3d"/>
  <polygon points="2700.5,1138.4 2746,1105.6 2714,1159.6 2658.8,1196.3" fill="#2f6f31"/>
  <polygon points="2700.5,1138.4 2746,1105.6 2794.3,1157.7 2768,1218.3 2658.8,1196.3" fill="none" stroke="#1f5a22" stroke-width="2.5" stroke-linejoin="round"/>
  <!-- round roof -->
  <ellipse cx="2475" cy="1410" rx="60" ry="55" fill="url(#sh)"/>
  <path d="M2407 1461C2412 1430 2430 1405 2450 1390C2470 1372 2500 1366 2525 1380C2545 1392 2548 1420 2540 1441L2517 1484C2510 1445 2490 1424 2460 1422C2435 1422 2415 1440 2407 1461Z" fill="url(#tg)"/>
  <path d="M2407 1461C2415 1440 2435 1422 2460 1422C2490 1424 2510 1445 2517 1484Z" fill="#5898a3"/>
  <path d="M2407 1461C2412 1430 2430 1405 2450 1390C2470 1372 2500 1366 2525 1380C2545 1392 2548 1420 2540 1441L2517 1484Z" fill="none" stroke="#2f6c78" stroke-width="2.5" stroke-linejoin="round"/>
  <path d="M2407 1461C2415 1440 2435 1422 2460 1422C2490 1424 2510 1445 2517 1484" fill="none" stroke="#3f7f8a" stroke-width="1.2"/>
  <!-- text shape -->
  <ellipse cx="2733" cy="1420" rx="72" ry="55" fill="url(#sh)"/>
  <g font-family="Liberation Sans" font-weight="bold" font-size="58" letter-spacing="-3" transform="translate(2664,1407) matrix(0.92,0.15,-0.34,0.72,0,0)">
   <g stroke="#7d0f1a" stroke-width="3.5" stroke-linejoin="round"><text x="0" y="30" fill="#a61724">TEXT</text><text x="0" y="28" fill="#a61724">TEXT</text><text x="0" y="26" fill="#a61724">TEXT</text><text x="0" y="24" fill="#a61724">TEXT</text><text x="0" y="22" fill="#a61724">TEXT</text><text x="0" y="20" fill="#a61724">TEXT</text><text x="0" y="18" fill="#a61724">TEXT</text><text x="0" y="16" fill="#a61724">TEXT</text><text x="0" y="14" fill="#a61724">TEXT</text><text x="0" y="12" fill="#a61724">TEXT</text><text x="0" y="10" fill="#a61724">TEXT</text><text x="0" y="8" fill="#a61724">TEXT</text><text x="0" y="6" fill="#a61724">TEXT</text><text x="0" y="4" fill="#a61724">TEXT</text><text x="0" y="2" fill="#a61724">TEXT</text></g>
   <text x="0" y="30" fill="#a61724">TEXT</text><text x="0" y="28" fill="#a61724">TEXT</text><text x="0" y="26" fill="#a61724">TEXT</text><text x="0" y="24" fill="#a61724">TEXT</text><text x="0" y="22" fill="#a61724">TEXT</text><text x="0" y="20" fill="#a61724">TEXT</text><text x="0" y="18" fill="#a61724">TEXT</text><text x="0" y="16" fill="#a61724">TEXT</text><text x="0" y="14" fill="#a61724">TEXT</text><text x="0" y="12" fill="#a61724">TEXT</text><text x="0" y="10" fill="#a61724">TEXT</text><text x="0" y="8" fill="#a61724">TEXT</text><text x="0" y="6" fill="#a61724">TEXT</text><text x="0" y="4" fill="#a61724">TEXT</text><text x="0" y="2" fill="#a61724">TEXT</text>
   <text x="0" y="0" fill="#cf1f30" stroke="#8a111d" stroke-width="1.5">TEXT</text>
  </g>
 </svg>
</div>


<div class="abs" style="left:2308.5px;top:841.5px;width:32px;height:93px;border:2px solid #dde2e6;border-right:none;background:#f0f0f3"></div>
<svg class="abs" style="left:2318px;top:865px" width="16" height="46" viewBox="0 0 16 46"><path d="M2.4 1.4Q11 12 15 24Q11 34 2.4 43.8" fill="none" stroke="#111" stroke-width="4" stroke-linecap="round"/></svg>

<svg class="abs" style="left:0;top:0;z-index:20" width="2880" height="1588">
 <defs><filter id="ash" x="-5%" y="-50%" width="110%" height="200%"><feGaussianBlur stdDeviation="2.5"/></filter></defs>
 <g filter="url(#ash)" opacity="0.35"><path d="M1150 677L2387 896" stroke="#000" stroke-width="12"/><polygon points="1093,667 1157,648 1150,678 1146,707" fill="#000"/></g>
 <path d="M1150 673L2387 892" stroke="#e02818" stroke-width="12"/>
 <polygon points="1093,663 1157,644 1150,674 1146,703" fill="#e02818"/>
</svg>
</div>
</body></html>
